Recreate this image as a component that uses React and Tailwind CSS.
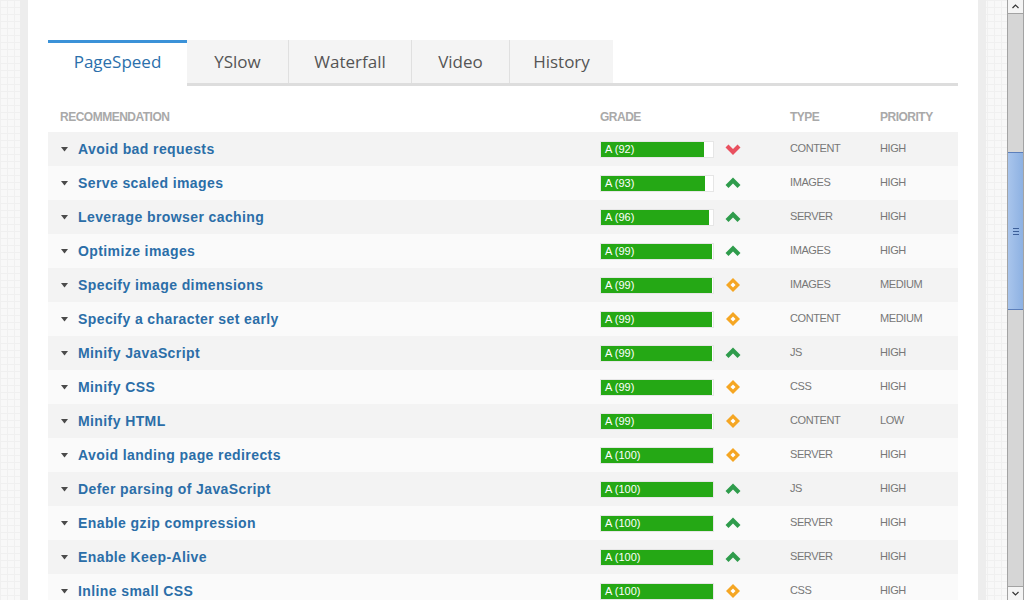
import React from 'react'

const ROWS = [
  { name: 'Avoid bad requests', score: 92, icon: 'down', type: 'CONTENT', priority: 'HIGH' },
  { name: 'Serve scaled images', score: 93, icon: 'up', type: 'IMAGES', priority: 'HIGH' },
  { name: 'Leverage browser caching', score: 96, icon: 'up', type: 'SERVER', priority: 'HIGH' },
  { name: 'Optimize images', score: 99, icon: 'up', type: 'IMAGES', priority: 'HIGH' },
  { name: 'Specify image dimensions', score: 99, icon: 'mid', type: 'IMAGES', priority: 'MEDIUM' },
  { name: 'Specify a character set early', score: 99, icon: 'mid', type: 'CONTENT', priority: 'MEDIUM' },
  { name: 'Minify JavaScript', score: 99, icon: 'up', type: 'JS', priority: 'HIGH' },
  { name: 'Minify CSS', score: 99, icon: 'mid', type: 'CSS', priority: 'HIGH' },
  { name: 'Minify HTML', score: 99, icon: 'mid', type: 'CONTENT', priority: 'LOW' },
  { name: 'Avoid landing page redirects', score: 100, icon: 'mid', type: 'SERVER', priority: 'HIGH' },
  { name: 'Defer parsing of JavaScript', score: 100, icon: 'up', type: 'JS', priority: 'HIGH' },
  { name: 'Enable gzip compression', score: 100, icon: 'up', type: 'SERVER', priority: 'HIGH' },
  { name: 'Enable Keep-Alive', score: 100, icon: 'up', type: 'SERVER', priority: 'HIGH' },
  { name: 'Inline small CSS', score: 100, icon: 'mid', type: 'CSS', priority: 'HIGH' },
]

const TABS = [
  { label: 'PageSpeed', w: 'w-[139px]', active: true },
  { label: 'YSlow', w: 'w-[101px]' },
  { label: 'Waterfall', w: 'w-[123px]', sep: true },
  { label: 'Video', w: 'w-[98px]', sep: true },
  { label: 'History', w: 'w-[104px]', sep: true },
]

const pattern =
  'bg-[#f8f8f8] bg-[linear-gradient(#f0f0f0_1px,transparent_1px),linear-gradient(90deg,#f0f0f0_1px,transparent_1px)] bg-[length:7px_7px]'

function TrendIcon({ kind }) {
  if (kind === 'down') {
    return (
      <svg width="16" height="12" viewBox="0 0 16 12" className="block">
        <polyline points="2,3 8,9 14,3" fill="none" stroke="#e9505f" strokeWidth="4.2" />
      </svg>
    )
  }
  if (kind === 'up') {
    return (
      <svg width="16" height="12" viewBox="0 0 16 12" className="block">
        <polyline points="2,9.5 8,3.5 14,9.5" fill="none" stroke="#2f9c4c" strokeWidth="4.2" />
      </svg>
    )
  }
  return (
    <svg width="16" height="16" viewBox="0 0 16 16" className="block">
      <polygon points="8,1 15,8 8,15 1,8" fill="#f5a623" />
      <rect x="6.2" y="6.2" width="3.6" height="3.6" fill="#ffffff" transform="rotate(45 8 8)" />
    </svg>
  )
}

function GradeBar({ score }) {
  return (
    <div className="w-[114px] h-[17px] border border-[#e6e6e6] bg-white">
      <div
        className="h-full bg-[#25a815] flex items-center pl-[4px] text-[11px] text-white leading-none whitespace-nowrap"
        style={{ width: `${score}%` }}
      >
        A ({score})
      </div>
    </div>
  )
}

function Scrollbar() {
  return (
    <div className="w-[17px] h-full flex flex-col bg-[#d6d6d6] border-x border-[#a3a3a3]">
      <div className="h-[14px] bg-[#f4f4f4] border-b border-[#a3a3a3] flex items-center justify-center">
        <svg width="7" height="5" viewBox="0 0 7 5">
          <polyline points="0.5,4 3.5,1 6.5,4" fill="none" stroke="#333" strokeWidth="1.2" />
        </svg>
      </div>
      <div className="h-[138px]" />
      <div className="h-[158px] bg-[linear-gradient(90deg,#a9c5ec,#8db1e2)] border-y border-[#5c7fbb] flex flex-col items-center justify-center gap-[2px]">
        <div className="w-[6px] h-px bg-[#3d5f99]" />
        <div className="w-[6px] h-px bg-[#3d5f99]" />
        <div className="w-[6px] h-px bg-[#3d5f99]" />
      </div>
      <div className="flex-1" />
      <div className="h-[14px] bg-[#f4f4f4] border-t border-[#a3a3a3] flex items-center justify-center">
        <svg width="7" height="5" viewBox="0 0 7 5">
          <polyline points="0.5,1 3.5,4 6.5,1" fill="none" stroke="#333" strokeWidth="1.2" />
        </svg>
      </div>
    </div>
  )
}

export default function App() {
  return (
    <div className={`w-[1024px] h-[600px] overflow-hidden flex ${pattern}`} style={{ fontFamily: '"Liberation Sans", Arial, sans-serif' }}>
      <div className="w-[20px] shrink-0" />
      <div className="w-[966px] shrink-0 h-full border-x-8 border-[#ededed] bg-white px-[20px] pt-[40px]">
        {/* Tabs */}
        <div className="flex h-[46px] border-b-[3px] border-[#dddddd]" style={{ fontFamily: '"Open Sans", "Noto Sans", sans-serif' }}>
          {TABS.map(t =>
            t.active ? (
              <div
                key={t.label}
                className={`${t.w} h-[46px] bg-white border-t-[3px] border-[#3b92d8] flex items-center justify-center pb-[6px] text-[17px] text-[#2b6fab]`}
              >
                {t.label}
              </div>
            ) : (
              <div
                key={t.label}
                className={`${t.w} h-[43px] bg-[#f4f4f4] flex items-center justify-center pt-[1px] text-[17px] text-[#555555] ${t.sep ? 'border-l border-[#e0e0e0]' : ''}`}
              >
                {t.label}
              </div>
            )
          )}
        </div>

        {/* Header */}
        <div className="flex pt-[23px] pb-[7px] text-[12px] font-bold text-[#a9a9a9] tracking-[-0.5px] leading-[16px]">
          <div className="w-[552px] pl-[12px]">RECOMMENDATION</div>
          <div className="w-[190px]">GRADE</div>
          <div className="w-[90px]">TYPE</div>
          <div className="flex-1">PRIORITY</div>
        </div>

        {/* Rows */}
        <div>
          {ROWS.map((r, i) => (
            <div key={r.name} className={`flex items-center h-[34px] ${i % 2 === 0 ? 'bg-[#f3f3f3]' : 'bg-[#fafafa]'}`}>
              <div className="w-[552px] flex items-center pl-[13px]">
                <svg width="7" height="5" viewBox="0 0 7 5" className="block">
                  <polygon points="0,0 7,0 3.5,4.5" fill="#4a4a4a" />
                </svg>
                <span className="ml-[10px] text-[14px] font-bold text-[#2b6ea8] tracking-[0.4px]">{r.name}</span>
              </div>
              <div className="w-[190px] flex items-center">
                <GradeBar score={r.score} />
                <div className="ml-[11px] w-[16px] flex items-center justify-center">
                  <TrendIcon kind={r.icon} />
                </div>
              </div>
              <div className="w-[90px] text-[11px] text-[#777777] tracking-[-0.4px] pb-px">{r.type}</div>
              <div className="flex-1 text-[11px] text-[#777777] tracking-[-0.4px] pb-px">{r.priority}</div>
            </div>
          ))}
        </div>
      </div>
      <div className="w-[21px] shrink-0" />
      <Scrollbar />
    </div>
  )
}
